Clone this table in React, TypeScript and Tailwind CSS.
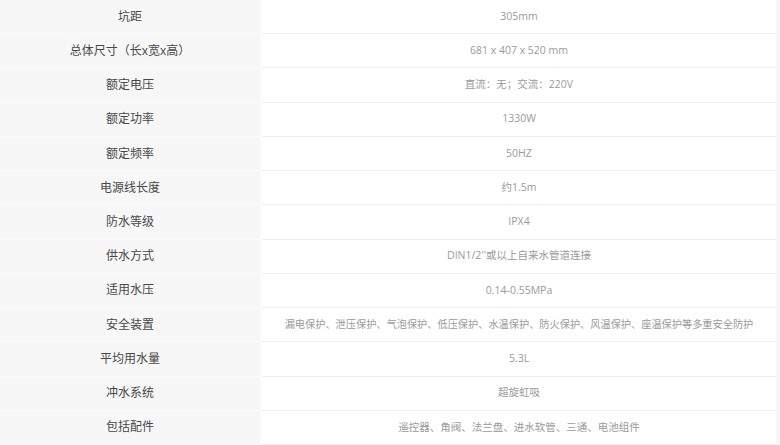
import React from "react";

const rows: [string, string, string?][] = [
  ["坑距", "305mm"],
  ["总体尺寸（长x宽x高）", "681 x 407 x 520 mm"],
  ["额定电压", "直流：无；交流：220V"],
  ["额定功率", "1330W"],
  ["额定频率", "50HZ"],
  ["电源线长度", "约1.5m"],
  ["防水等级", "IPX4"],
  ["供水方式", "DIN1/2''或以上自来水管道连接"],
  ["适用水压", "0.14-0.55MPa"],
  ["安全装置", "漏电保护、泄压保护、气泡保护、低压保护、水温保护、防火保护、风温保护、座温保护等多重安全防护", "long"],
  ["平均用水量", "5.3L"],
  ["冲水系统", "超旋虹吸"],
  ["包括配件", "遥控器、角阀、法兰盘、进水软管、三通、电池组件"],
];

export default function App() {
  return (
    <div
      className="w-[780px] h-[445px] bg-[#f6f6f6] grid grid-rows-[repeat(13,minmax(0,1fr))] overflow-hidden"
      style={{ fontFamily: '"Open Sans", "Noto Sans CJK SC", sans-serif' }}
    >
      {rows.map(([k, v, long], i) => (
        <div key={i} className="flex min-h-0">
          <div className="w-[260px] bg-[#f7f7f7] border-b border-[#fbfbfb] flex items-center justify-center text-[12px] text-[#484848]">
            {k}
          </div>
          <div className="w-[2px] bg-[#fcfcfc]" />
          <div
            className={
              "w-[514px] bg-white border-b border-[#efefef] flex items-center justify-center text-[#9a9a9a] whitespace-nowrap " +
              (long ? "text-[10.2px]" : "text-[10.5px]")
            }
          >
            {v}
          </div>
          <div className="flex-1 bg-[#f6f6f6]" />
        </div>
      ))}
    </div>
  );
}
